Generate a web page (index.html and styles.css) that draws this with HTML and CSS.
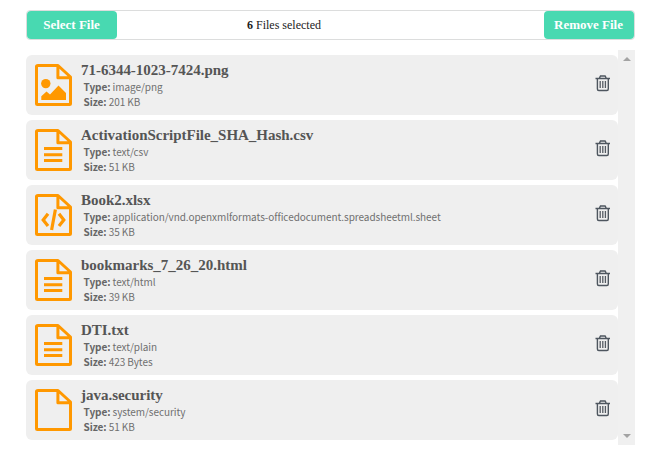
FILE: index.html
```html
<!DOCTYPE html>
<html lang="en">
<head>
<meta charset="utf-8">
<title>File upload</title>
<link rel="stylesheet" href="styles.css">
</head>
<body>
<svg class="defs" aria-hidden="true">
  <symbol id="page" viewBox="0 0 37 42">
    <path d="M3 1.5H23L35.5 13V39.5Q35.5 40.5 34.5 40.5H2.5Q1.5 40.5 1.5 39.5V2.5Q1.5 1.5 3 1.5Z M22.9 2V13.8H35" fill="none" stroke="#ff9800" stroke-width="3" stroke-linejoin="round"/>
  </symbol>
  <symbol id="lines" viewBox="0 0 37 42">
    <path d="M9 19.5H27.3M9 25.7H27.3M9 31.5H27.3" stroke="#ff9800" stroke-width="3"/>
  </symbol>
  <symbol id="image" viewBox="0 0 37 42">
    <circle cx="10.8" cy="19.6" r="4.7" fill="#ff9800"/>
    <path d="M6.3 36V32.2L11.5 27.5L15 30.5L23.5 21.5L31 29V36Z" fill="#ff9800"/>
  </symbol>
  <symbol id="code" viewBox="0 0 37 42">
    <path d="M13 19.8L8.2 25.9L13 32M24 19.8L28.8 25.9L24 32M20.4 15.5L16.6 36" fill="none" stroke="#ff9800" stroke-width="3.2"/>
  </symbol>
  <symbol id="trash" viewBox="0 0 16 18">
    <path d="M4.5 3.8L5.5 2H10.1L11.1 3.8M.5 4.5H15M2.4 4.5V15Q2.4 16.5 3.8 16.5H11.9Q13.3 16.5 13.3 15V4.5" fill="none" stroke="#4e565f" stroke-width="1.4"/>
    <path d="M5.2 7V14M7.8 7V14M10.4 7V14" stroke="#555b63" stroke-width="1.3"/>
  </symbol>
</svg>
<main class="uploader">
  <header class="toolbar">
    <button class="btn select">Select File</button>
    <div class="count"><b>6</b> Files selected</div>
    <button class="btn remove">Remove File</button>
  </header>
  <section class="files">
    <ul class="list">
      <li class="item">
        <svg class="icon"><use href="#page"/><use href="#image"/></svg>
        <div class="info"><h3>71-6344-1023-7424.png</h3><p><b>Type:</b> image/png</p><p><b>Size:</b> 201 KB</p></div>
        <svg class="trash"><use href="#trash"/></svg>
      </li>
      <li class="item">
        <svg class="icon"><use href="#page"/><use href="#lines"/></svg>
        <div class="info"><h3>ActivationScriptFile_SHA_Hash.csv</h3><p><b>Type:</b> text/csv</p><p><b>Size:</b> 51 KB</p></div>
        <svg class="trash"><use href="#trash"/></svg>
      </li>
      <li class="item">
        <svg class="icon"><use href="#page"/><use href="#code"/></svg>
        <div class="info"><h3>Book2.xlsx</h3><p><b>Type:</b> application/vnd.openxmlformats-officedocument.spreadsheetml.sheet</p><p><b>Size:</b> 35 KB</p></div>
        <svg class="trash"><use href="#trash"/></svg>
      </li>
      <li class="item">
        <svg class="icon"><use href="#page"/><use href="#lines"/></svg>
        <div class="info"><h3>bookmarks_7_26_20.html</h3><p><b>Type:</b> text/html</p><p><b>Size:</b> 39 KB</p></div>
        <svg class="trash"><use href="#trash"/></svg>
      </li>
      <li class="item">
        <svg class="icon"><use href="#page"/><use href="#lines"/></svg>
        <div class="info"><h3>DTI.txt</h3><p><b>Type:</b> text/plain</p><p><b>Size:</b> 423 Bytes</p></div>
        <svg class="trash"><use href="#trash"/></svg>
      </li>
      <li class="item">
        <svg class="icon"><use href="#page"/></svg>
        <div class="info"><h3>java.security</h3><p><b>Type:</b> system/security</p><p><b>Size:</b> 51 KB</p></div>
        <svg class="trash"><use href="#trash"/></svg>
      </li>
    </ul>
    <div class="scrollbar"><i class="up"></i><i class="down"></i></div>
  </section>
</main>
</body>
</html>
```

FILE: styles.css
```css
* { box-sizing: border-box; }
body { margin: 0; background: #fff; overflow: hidden; font-family: "Liberation Serif", serif; }
.defs { display: none; }
.uploader { width: 609px; margin: 10px 0 0 26px; }
.toolbar {
  display: flex;
  align-items: center;
  height: 30px;
  border: 1px solid #dcdddd;
  border-radius: 4px;
}
.btn {
  height: 28px;
  padding: 0 1px 0 0;
  border: 0;
  border-radius: 4px;
  background: #48d9b1;
  color: #fff;
  font: bold 13px "Liberation Serif", serif;
}
.select { width: 90px; }
.remove { width: 90px; margin-left: auto; }
.count { padding-left: 130px; font-size: 12px; color: #222; }
.files { display: flex; height: 395px; margin-top: 10px; }
.list {
  display: flex;
  flex-direction: column;
  gap: 5px;
  width: 592px;
  margin: 0;
  padding: 5px 0 0;
  list-style: none;
}
.item {
  display: flex;
  align-items: flex-start;
  height: 60px;
  padding-left: 9px;
  border-radius: 6px;
  background: #efefef;
}
.icon { width: 37px; height: 42px; margin-top: 9px; }
.info { flex: 1; padding: 6px 0 0 9px; }
.info h3 { margin: 0; font-size: 15px; line-height: 18px; color: #555; letter-spacing: -0.02px; }
.info p {
  margin: 0 0 0 2.5px;
  font: 10px/15px "Noto Sans CJK SC", sans-serif;
  letter-spacing: -0.06px;
  color: #707070;
  white-space: nowrap;
}
.info b { color: #666; }
.trash { width: 16px; height: 18px; margin: 19px 7px 0 0; }
.scrollbar {
  display: flex;
  flex-direction: column;
  justify-content: space-between;
  align-items: center;
  width: 17px;
  padding: 7px 0;
  background: #f0f0f0;
}
.up, .down { border: 4px solid transparent; }
.up { border-top: 0; border-bottom-color: #a3a3a3; }
.down { border-bottom: 0; border-top-color: #a3a3a3; }
```
